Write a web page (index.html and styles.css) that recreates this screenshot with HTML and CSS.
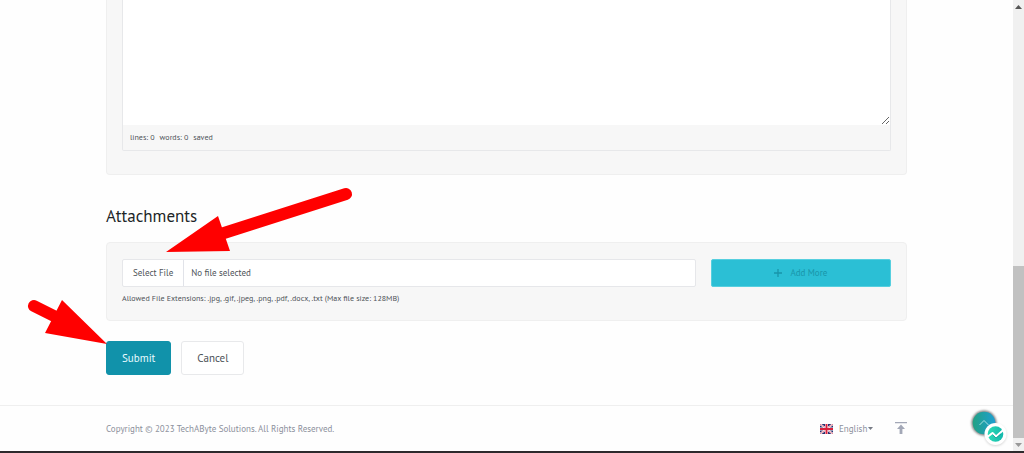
FILE: index.html
```html
<!DOCTYPE html>
<html lang="en">
<head>
<meta charset="utf-8">
<meta name="viewport" content="width=device-width, initial-scale=1">
<title>Submit Ticket</title>
<link rel="stylesheet" href="styles.css">
</head>
<body>
<div class="window">
  <div class="page">
    <form class="container">
      <section class="panel panel-message">
        <div class="editor">
          <textarea class="editor-input" aria-label="Message"></textarea>
          <div class="editor-status"><span>lines: 0</span><span>words: 0</span><span>saved</span></div>
        </div>
      </section>
      <h2 class="section-title">Attachments</h2>
      <section class="panel panel-files">
        <div class="file-row">
          <label class="file-field" for="attachment">
            <input class="file-input" id="attachment" type="file">
            <span class="file-button">Select File</span>
            <span class="file-name">No file selected</span>
          </label>
          <button class="add-more" type="button" disabled>
            <svg width="8" height="8" viewBox="0 0 8 8" aria-hidden="true"><path d="M4 0V8M0 4H8" stroke="currentColor" stroke-width="1.3"/></svg>
            Add More
          </button>
        </div>
        <p class="hint">Allowed File Extensions: .jpg, .gif, .jpeg, .png, .pdf, .docx, .txt (Max file size: 128MB)</p>
      </section>
      <div class="actions">
        <button class="button button-primary" type="submit">Submit</button>
        <button class="button" type="button">Cancel</button>
      </div>
    </form>
    <footer class="footer">
      <span>Copyright © 2023 TechAByte Solutions. All Rights Reserved.</span>
      <div class="footer-tools">
        <label class="language">
          <svg width="13" height="10" viewBox="0 0 13 10" aria-hidden="true">
            <rect width="13" height="10" fill="#28306f"/>
            <path d="M0 0L13 10M13 0L0 10" stroke="#fff" stroke-width="1.8"/>
            <path d="M0 0L13 10M13 0L0 10" stroke="#d8203c" stroke-width=".6"/>
            <path d="M6.500 0V10M0 5H13" stroke="#fff" stroke-width="3"/>
            <path d="M6.500 0V10M0 5H13" stroke="#d8203c" stroke-width="2"/>
          </svg>
          <select class="language-select" aria-label="Language"><option>English</option></select>
          <svg width="5" height="3" viewBox="0 0 5 3" aria-hidden="true"><path d="M0 0H5L2.5 3Z" fill="#777b85"/></svg>
        </label>
        <a class="top-link" href="#" aria-label="Back to top">
          <svg width="12" height="13" viewBox="0 0 12 13" aria-hidden="true"><path d="M0 0H12V1.300H0ZM6 2.500L10 7H7.400V12H4.600V7H2Z" fill="#a3a8b7"/></svg>
        </a>
      </div>
    </footer>
  </div>
  <div class="scrollbar" aria-hidden="true">
    <svg width="7" height="4" viewBox="0 0 7 4"><path d="M3.5 0L7 4H0Z" fill="#555"/></svg>
    <div class="scroll-thumb"></div>
    <svg width="7" height="4" viewBox="0 0 7 4"><path d="M0 0H7L3.5 4Z" fill="#999"/></svg>
  </div>
</div>
<svg class="arrows" width="360" height="360" viewBox="0 0 360 360" aria-hidden="true">
  <g stroke="#f00" stroke-width="12" stroke-linecap="round" fill="#f00">
    <path d="M346 194L224 233M34 306L56 317"/>
    <path stroke="none" d="M166 252L218 216L230 251ZM107 344L62 300L45 333Z"/>
  </g>
</svg>
<a class="chat" href="#" aria-label="Chat and scroll tools">
  <svg width="48" height="50" viewBox="0 0 48 50" aria-hidden="true">
    <defs>
      <linearGradient id="teal" x1="0" x2="1"><stop offset="0" stop-color="#22a183"/><stop offset="1" stop-color="#1d9fd1"/></linearGradient>
      <linearGradient id="mint" x1="0" x2="1"><stop offset="0" stop-color="#2ddbb5"/><stop offset="1" stop-color="#12b8ad"/></linearGradient>
      <filter id="soft" x="-50%" y="-50%" width="200%" height="200%"><feGaussianBlur stdDeviation="1.3"/></filter>
    </defs>
    <circle cx="20" cy="21" r="12.500" fill="#555" opacity=".75" filter="url(#soft)"/>
    <circle cx="20" cy="21" r="11.300" fill="url(#teal)"/>
    <path d="M15.500 23L20 18.500L24.500 23" fill="none" stroke="#b9e6e8" stroke-width=".9"/>
    <circle cx="31.500" cy="33" r="11" fill="#777" opacity=".3" filter="url(#soft)"/>
    <circle cx="31.500" cy="32" r="11" fill="#fff"/>
    <circle cx="31.500" cy="32" r="7.800" fill="url(#mint)"/>
    <path d="M22 36L28.500 31L32 34.500L41 26.500" fill="none" stroke="#fff" stroke-width="2" stroke-linejoin="round"/>
    <path d="M28.500 32.500L32 36L37 31.800" fill="none" stroke="#0a8f8c" stroke-width=".7"/>
  </svg>
</a>
</body>
</html>
```
FILE: styles.css
```css
* { box-sizing: border-box; }

body {
  margin: 0;
  overflow: hidden;
  background: #fefefe;
  color: #4d5257;
  font-family: "PT Sans", Lato, sans-serif;
  font-size: 9px;
  line-height: 12px;
}

button, select, textarea { font: inherit; color: inherit; }

.window {
  display: flex;
  min-height: 100vh;
  border-bottom: 2px solid #2d292c;
}

.page { flex: 1; min-width: 0; }

.container { padding: 0 106px; }

.panel {
  padding: 16px 15px;
  background: #f7f7f7;
  border: 1px solid #efefef;
  border-radius: 4px;
}

.panel-message {
  padding-top: 0;
  padding-bottom: 23px;
  border-top: 0;
  border-radius: 0 0 4px 4px;
}

.editor {
  border: 1px solid #e7e8ea;
  border-top: 0;
  border-radius: 0 0 2px 2px;
}

.editor-input {
  display: block;
  width: 100%;
  height: 125px;
  border: 0;
  background: #fff;
  resize: vertical;
}

.editor-status {
  display: flex;
  gap: 5px;
  padding: 6px 7px 7px;
  font-size: 8px;
}

.section-title {
  margin: 31px 0 16px;
  color: #202426;
  font-size: 17px;
  font-weight: 400;
  line-height: 20px;
}

.file-row {
  display: grid;
  grid-template-columns: 573fr 180fr;
  gap: 15px;
}

.file-field {
  position: relative;
  display: flex;
  align-items: center;
  height: 28px;
  background: #fff;
  border: 1px solid #e6e7ea;
  border-radius: 2px;
}

.file-input {
  position: absolute;
  inset: 0;
  width: 100%;
  opacity: 0;
}

.file-button {
  padding: 7px 10px;
  border-right: 1px solid #e1e3e9;
}

.file-name { padding: 0 7px; }

.add-more {
  display: flex;
  align-items: center;
  justify-content: center;
  gap: 8px;
  height: 28px;
  padding: 0;
  color: #1995aa;
  background: #2bbfd5;
  border: 1px solid #56cfdf;
  border-radius: 2px;
}

.hint {
  margin: 5px 0 0;
  font-size: 8px;
}

.actions {
  display: flex;
  gap: 10px;
  padding: 20px 0 30px;
}

.button {
  height: 34px;
  padding: 0 15px;
  font-size: 11px;
  background: #fff;
  border: 1px solid #e8e9eb;
  border-radius: 3px;
}

.button-primary {
  color: #e9fbff;
  background: #1192aa;
  border-color: #1192aa;
}

.footer {
  display: flex;
  align-items: center;
  justify-content: space-between;
  height: 46px;
  padding: 0 106px;
  color: #8c909c;
  border-top: 1px solid #efefef;
}

.footer-tools, .language { display: flex; align-items: center; }
.footer-tools { gap: 22px; }

.language-select {
  margin-left: 6px;
  padding: 0;
  background: none;
  border: 0;
  appearance: none;
}

.top-link { display: flex; }

.scrollbar {
  display: flex;
  flex-direction: column;
  align-items: center;
  justify-content: space-between;
  width: 11px;
  padding: 5px 0 4px;
  background: #f0f0f0;
}

.scroll-thumb {
  width: 100%;
  height: 172px;
  margin: auto 0 5px;
  background: #c1c1c1;
}

.arrows {
  position: absolute;
  top: 0;
  left: 0;
  pointer-events: none;
}

.chat {
  position: fixed;
  right: 12px;
  bottom: 1px;
  display: flex;
}
```
